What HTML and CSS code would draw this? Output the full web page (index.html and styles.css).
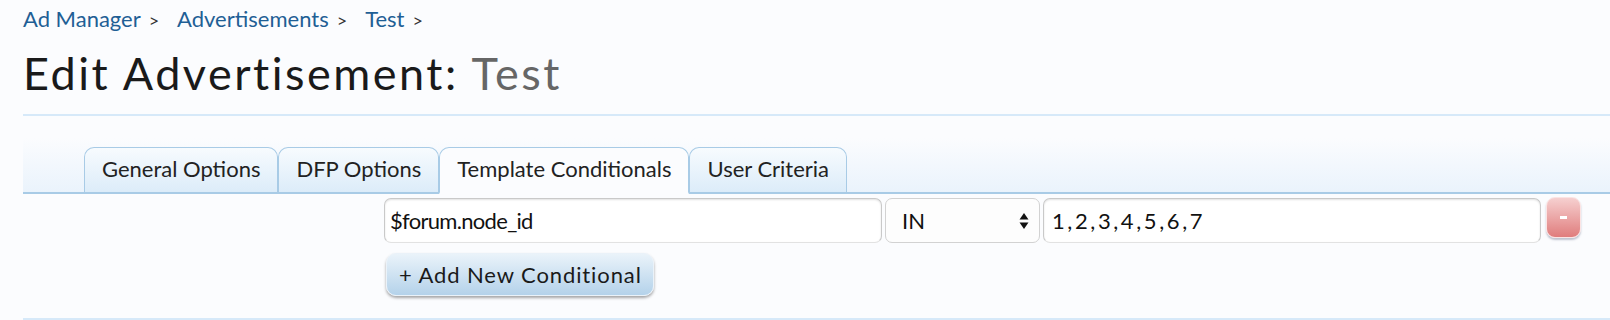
FILE: index.html
```html
<!DOCTYPE html>
<html>

<head>
    <title>Edit Advertisement: Test</title>
    <link rel="stylesheet" href="styles.css">
</head>

<body>
    <div class="page">
        <div class="breadcrumb">
            <a href="#">Ad Manager</a><span class="sep">&gt;</span>
            <a href="#">Advertisements</a><span class="sep">&gt;</span>
            <a href="#">Test</a><span class="sep">&gt;</span>
        </div>

        <h1 class="titulo">Edit Advertisement: <em>Test</em></h1>

        <div class="formBox">
            <ul class="tabs">
                <li class="tab">General Options</li>
                <li class="tab">DFP Options</li>
                <li class="tab active">Template Conditionals</li>
                <li class="tab">User Criteria</li>
            </ul>

            <div class="pane">
                <div class="condRow">
                    <input class="textCtrl campo" type="text" value="$forum.node_id">
                    <div class="selectCtrl">
                        <span>IN</span>
                        <svg class="flechas" width="10" height="20" viewBox="0 0 10 20">
                            <path d="M5 2 L9.5 8.5 H0.5 Z" fill="#111" />
                            <path d="M0.5 11.5 H9.5 L5 18 Z" fill="#111" />
                        </svg>
                    </div>
                    <input class="textCtrl valores" type="text" value="1,2,3,4,5,6,7">
                    <button class="delBtn"><span class="menos"></span></button>
                </div>
                <button class="addBtn">+ Add New Conditional</button>
            </div>
        </div>
    </div>
</body>

</html>
```

FILE: styles.css
```css
body {
    margin: 0;
    background-color: #fbfcfe;
    font-family: "Lato", "Trebuchet MS", sans-serif;
    color: #1a1a1a;
}

.page {
    padding-left: 23px;
}

.breadcrumb {
    padding-top: 4px;
    height: 30px;
    line-height: 30px;
    font-size: 22px;
    white-space: nowrap;
}

.breadcrumb a {
    color: #1f5f95;
    text-decoration: none;
}

.sep {
    font-size: 18px;
    color: #333;
    margin: 0 13px 0 8px;
}

.titulo {
    margin: 13px 0 15px 0;
    height: 52px;
    line-height: 52px;
    font-size: 45px;
    letter-spacing: 2.5px;
    font-weight: normal;
    color: #1a1a1a;
}

.titulo em {
    font-style: normal;
    color: #666;
}

.formBox {
    border-top: 2px solid #d6e9f9;
    border-bottom: 2px solid #d6e9f9;
}

.tabs {
    list-style: none;
    margin: 0;
    padding: 31px 0 0 61px;
    display: flex;
    border-bottom: 2px solid #a8cbe6;
    background: linear-gradient(to bottom, #fbfcfe 0, #fbfcfe 22px, #eaf3fc 100%);
}

.tab {
    margin-bottom: -2px;
    padding: 0 17px 3px 17px;
    line-height: 41px;
    font-size: 22px;
    color: #222;
    border: 1px solid #a8cbe6;
    border-bottom: 2px solid #a8cbe6;
    border-radius: 10px 10px 0 0;
    background: linear-gradient(to bottom, #f7fbfe, #dcecf9);
    cursor: pointer;
}

.tab.active {
    background: #fbfcfe;
    border-bottom-color: #fbfcfe;
}

.pane {
    padding: 4px 0 22px 361px;
}

.condRow {
    display: flex;
    align-items: flex-start;
    gap: 3px;
}

.textCtrl {
    box-sizing: border-box;
    width: 498px;
    height: 45px;
    margin: 0;
    padding: 0 8px;
    font-family: "Lato", "Trebuchet MS", sans-serif;
    font-size: 22px;
    color: #111;
    background-color: #fff;
    border: 1px solid #c9c9c9;
    border-bottom-color: #e2e2e2;
    border-radius: 7px;
    box-shadow: inset 0 1px 2px rgba(0, 0, 0, 0.12);
    outline: none;
}

.campo {
    padding-left: 5px;
    letter-spacing: -0.7px;
}

.valores {
    letter-spacing: 2.6px;
}

.selectCtrl {
    box-sizing: border-box;
    width: 155px;
    height: 45px;
    padding: 0 10px 0 16px;
    display: flex;
    justify-content: space-between;
    align-items: center;
    font-size: 22px;
    color: #111;
    background-color: #fdfdfd;
    border: 1px solid #d2d2d2;
    border-radius: 7px;
}

.delBtn {
    box-sizing: border-box;
    width: 35px;
    height: 41px;
    margin: -1px 0 0 2px;
    padding: 0;
    display: flex;
    justify-content: center;
    align-items: center;
    border: 1px solid #fbe4e4;
    border-radius: 9px;
    background: linear-gradient(to bottom, #f6d0d0, #e07d7d);
    box-shadow: 0 2px 2px rgba(80, 90, 120, 0.35);
    cursor: pointer;
}

.menos {
    width: 7px;
    height: 3px;
    background-color: #fff;
}

.addBtn {
    box-sizing: border-box;
    width: 268px;
    height: 43px;
    margin: 10px 0 0 2px;
    padding: 0 0 0 12px;
    display: block;
    text-align: left;
    font-family: "Lato", "Trebuchet MS", sans-serif;
    font-size: 22px;
    letter-spacing: 0.9px;
    color: #1a1a1a;
    border: 1px solid #eaf2f9;
    border-radius: 10px;
    background: linear-gradient(to bottom, #eaf3fa, #b4d2ea);
    box-shadow: 0 2px 3px rgba(0, 0, 0, 0.35);
    cursor: pointer;
}
```
